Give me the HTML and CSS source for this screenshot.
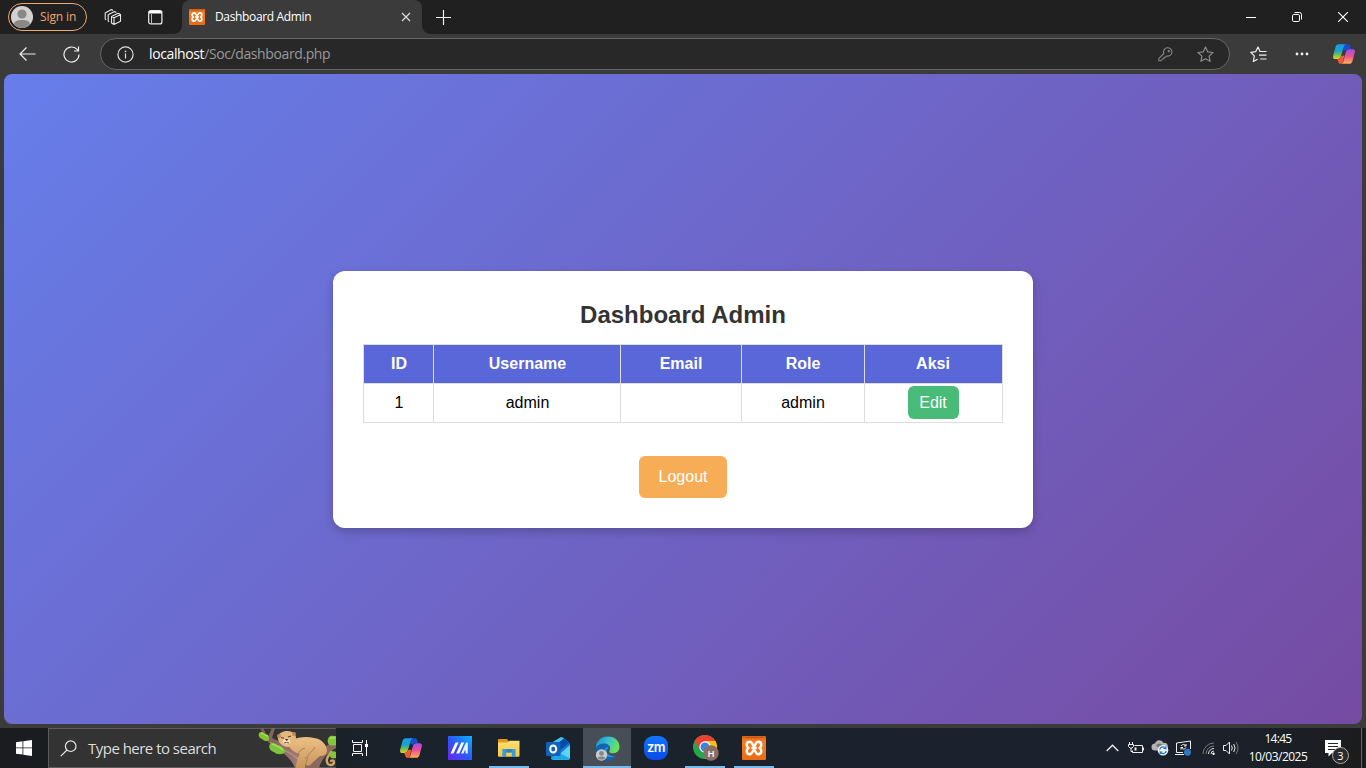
FILE: index.html
```html
<!DOCTYPE html>
<html lang="id">
<head>
<meta charset="utf-8">
<title>Dashboard Admin</title>
<link rel="stylesheet" href="styles.css">
</head>
<body>
<svg class="defs" width="0" height="0" aria-hidden="true">
  <defs>
    <linearGradient id="cpA" x1="0" y1="0" x2="0" y2="1"><stop offset="0" stop-color="#1b9cf0"/><stop offset=".45" stop-color="#17a3c8"/><stop offset=".72" stop-color="#6ebf55"/><stop offset="1" stop-color="#f4cf1c"/></linearGradient>
    <linearGradient id="cpB" x1="0" y1="0" x2="0" y2="1"><stop offset="0" stop-color="#a44cf0"/><stop offset=".45" stop-color="#e84f9b"/><stop offset="1" stop-color="#ffb04d"/></linearGradient>
    <linearGradient id="xg" x1="0" y1="0" x2="0" y2="1"><stop offset="0" stop-color="#d95f14"/><stop offset=".2" stop-color="#f57c22"/><stop offset="1" stop-color="#ea6c16"/></linearGradient>
    <linearGradient id="edgeTop" x1="0" y1="0" x2="1" y2=".4"><stop offset="0" stop-color="#1686d8"/><stop offset=".5" stop-color="#35bfd0"/><stop offset="1" stop-color="#6be05c"/></linearGradient>
    <linearGradient id="mg" x1="0" y1="1" x2="1" y2="0"><stop offset="0" stop-color="#6a22f5"/><stop offset=".5" stop-color="#2b5bfa"/><stop offset="1" stop-color="#08b4ff"/></linearGradient>
    <linearGradient id="fur" x1="0" y1="0" x2="0" y2="1"><stop offset="0" stop-color="#ecc184"/><stop offset="1" stop-color="#c9955d"/></linearGradient>
    <linearGradient id="bark" x1="0" y1="0" x2="1" y2="0"><stop offset="0" stop-color="#7a5a50"/><stop offset="1" stop-color="#a5857a"/></linearGradient>
    <linearGradient id="folder" x1="0" y1="0" x2="0" y2="1"><stop offset="0" stop-color="#ffdf75"/><stop offset="1" stop-color="#f9c844"/></linearGradient>
    <symbol id="copilot" viewBox="0 0 22 20">
      <path d="M11 .2h4c1.300 0 1.900.8 2.200 2L18 5.200h-2.500c-1.700 0-2.500.6-3 2L10 5z" fill="#174fd3"/>
      <path d="M5.500.2H13c-1.500.3-2 1.600-2.500 3.200L8 12c-.6 2-1.500 3-3.400 3H2.200C.4 15-.3 13.500.2 11.500L2.500 3C3 1.200 4 .2 5.500.2z" fill="url(#cpA)"/>
      <path d="M4.300 15c2.300 0 3.300-1.200 4-3l3.200-.5-1.500 5.700c-.5 1.800-1 2.600-2.500 2.600-1.200 0-1.800-.6-2.100-1.900z" fill="#f15b35"/>
      <path d="M16.300 5.200h3.500c1.800 0 2.500 1.500 2 3.300L19.500 17c-.5 1.900-1.500 2.800-3.200 2.800H8c1.500-.2 2-1.200 2.500-2.800L12.800 8.200c.6-2 1.600-3 3.500-3z" fill="url(#cpB)"/>
    </symbol>
    <symbol id="xampp" viewBox="0 0 24 24">
      <rect width="24" height="24" rx="1" fill="url(#xg)"/>
      <path d="M3 1.500h18" stroke="#c2550f"/>
      <path d="M12 9.700C10 9.700 10.600 5.800 8 5.800 5.800 5.800 4.700 7.200 4.700 9c0 1.400.7 2.400 1.800 3-1.100.6-1.800 1.600-1.800 3 0 1.800 1.100 3.200 3.300 3.200 2.600 0 2-3.900 4-3.900s1.400 3.900 4 3.900c2.200 0 3.300-1.400 3.300-3.200 0-1.400-.7-2.400-1.800-3 1.100-.6 1.800-1.600 1.800-3 0-1.800-1.100-3.200-3.300-3.200-2.600 0-2 3.900-4 3.900z" fill="none" stroke="#fff" stroke-width="2.500" stroke-linejoin="round"/>
      <path d="M10.500 12h3" stroke="#fff" stroke-width="2.800" stroke-linecap="round"/>
    </symbol>
  </defs>
</svg>

<div class="desktop">
  <header class="titlebar">
    <div class="profile">
      <svg width="22" height="22" viewBox="0 0 22 22"><circle cx="11" cy="11" r="11" fill="#d4d2d0"/><circle cx="11" cy="8" r="4.600" fill="#8a8886"/><path d="M3 18.500c.3-3.500 3-4.500 8-4.500s7.700 1 8 4.500a11 11 0 0 1-16 0z" fill="#8a8886"/></svg>
      <span class="ui signin">Sign in</span>
    </div>
    <svg class="workspaces" width="18" height="18" viewBox="0 0 18 18" fill="none" stroke="#e8e8e8" stroke-width="1.100" stroke-linejoin="round"><path d="M7.500 8.500 14 5.200l2.500 1.300v6.800L10 16.500l-2.500-1.400zM7.500 8.500l2.500 1.200 6.300-3M10 9.900v6.400M5.200 13.700l-1-.6V6.700L10.500 3.500l1.800.9M2.200 11.700l-1-.6V4.900L7.500 1.600l1.600.9"/></svg>
    <svg class="tabmenu" width="15" height="15" viewBox="0 0 15 15"><rect x=".7" y=".7" width="13.200" height="13.200" rx="2" fill="none" stroke="#eee" stroke-width="1.200"/><path d="M1 1h12.800v2.500H1z" fill="#fff"/><path d="M3.500 4v9.500" stroke="#bbb"/></svg>
    <div class="tab">
      <svg width="16" height="16"><use href="#xampp"/></svg>
      <span class="ui tabtitle">Dashboard Admin</span>
      <svg class="tabclose" width="10" height="10" viewBox="0 0 10 10" stroke="#ddd" stroke-width="1.200"><path d="M1 1l8 8M9 1L1 9"/></svg>
    </div>
    <svg class="newtab" width="15" height="15" viewBox="0 0 15 15" stroke="#f2f2f2" stroke-width="1.200"><path d="M7.500 0v15M0 7.500h15"/></svg>
    <div class="winbtns">
      <svg width="10" height="10" stroke="#fff"><path d="M0 5.500h10"/></svg>
      <svg width="10" height="10" viewBox="0 0 10 10" fill="none" stroke="#fff"><rect x=".5" y="2.500" width="7" height="7" rx="1.300"/><path d="M2.500.5h5a2 2 0 0 1 2 2v5"/></svg>
      <svg width="10" height="10" stroke="#fff" stroke-width="1.100"><path d="M0 0l10 10M10 0L0 10"/></svg>
    </div>
  </header>

  <nav class="toolbar">
    <svg class="back" width="17" height="14" viewBox="0 0 17 14" fill="none" stroke="#ededed" stroke-width="1.200"><path d="M16.500 7H1M7.500.5 1 7l6.500 6.500"/></svg>
    <svg class="reload" width="17" height="17" viewBox="0 0 17 17" fill="none" stroke="#ededed" stroke-width="1.200"><path d="M16 8.500A7.500 7.500 0 1 1 13.800 3.200L15.500 5M15.500.5V5H11"/></svg>
    <div class="address">
      <svg width="17" height="17" viewBox="0 0 17 17" fill="none" stroke="#ddd" stroke-width="1.200"><circle cx="8.500" cy="8.500" r="7.600"/><path d="M8.500 7.500v5"/><path d="M8.500 4.700v1.500" stroke-width="1.500"/></svg>
      <span class="ui url"><b>localhost</b>/Soc/dashboard.php</span>
      <svg class="key" width="15" height="15" viewBox="0 0 15 15" fill="none" stroke="#858585" stroke-width="1.100" stroke-linejoin="round"><path d="M5.800 6.500A4.200 4.200 0 1 1 8.600 9L7.400 10.300H6v1.400H4.700L3.200 13.800H.8v-2.200z"/><circle cx="10.800" cy="4.200" r=".6" fill="#858585"/></svg>
      <svg class="star" width="17" height="17" viewBox="0 0 17 17" fill="none" stroke="#8c8c8c" stroke-width="1.200" stroke-linejoin="round"><path d="M8.500 1l2.200 4.800 5.300.7-3.900 3.600 1 5.200-4.600-2.500-4.600 2.500 1-5.200L1 6.500l5.300-.7z"/></svg>
    </div>
    <svg class="favs" width="17" height="17" viewBox="0 0 17 17" fill="none" stroke="#f0f0f0" stroke-width="1.200" stroke-linejoin="round"><path d="M10.200 5.500H10L8 1 5.800 5.600.8 6.300l3.500 3.600-1 5.600 4.300-2.300M10 5.500h6.500M9 9.200h7.500M10.200 13h6.300"/></svg>
    <svg class="dots" width="14" height="4" fill="#eee"><circle cx="2" cy="2" r="1.400"/><circle cx="7" cy="2" r="1.400"/><circle cx="12" cy="2" r="1.400"/></svg>
    <svg class="copilot" width="22" height="20"><use href="#copilot"/></svg>
  </nav>

  <main class="page">
    <section class="card">
      <h2>Dashboard Admin</h2>
      <table>
        <colgroup><col class="c-id"><col class="c-user"><col class="c-mail"><col class="c-role"><col class="c-act"></colgroup>
        <thead><tr><th>ID</th><th>Username</th><th>Email</th><th>Role</th><th>Aksi</th></tr></thead>
        <tbody><tr><td>1</td><td>admin</td><td></td><td>admin</td><td><a class="btn edit">Edit</a></td></tr></tbody>
      </table>
      <a class="btn logout">Logout</a>
    </section>
  </main>

  <footer class="taskbar">
    <div class="start"><svg width="16" height="16" viewBox="0 0 16 16" fill="#fff"><path d="M0 2.200 6.500 1.300V7.500H0zM7.300 1.200 16 0v7.500H7.300zM0 8.300h6.500v6.300L0 13.700zM7.300 8.300H16V16l-8.700-1.200z"/></svg></div>
    <div class="search">
      <svg class="glass" width="17" height="17" viewBox="0 0 17 17" fill="none" stroke="#e6e6e6" stroke-width="1.200"><circle cx="10.700" cy="6.200" r="5.300"/><path d="M7 10 .8 16.200"/></svg>
      <span class="ui hint">Type here to search</span>
      <svg class="doodle" width="78" height="40" viewBox="0 0 78 40">
        <path d="M2 0h3l5 9c1-2 2-5 4-9h3l-3 10c9 5 22 8 30 15l6 15H37C32 27 18 21 9 13z" fill="url(#bark)"/>
        <path d="M42 40c4-10 13-15 19-18 6-3 11-6 17-11v9c-8 5-14 10-17 20z" fill="#8a6a5f"/>
        <path d="M12 14c9 7 20 9 28 17" stroke="#b19185" stroke-width="1.500" fill="none"/>
        <path d="M73 24c-3 4-6 8-3 12 2 2 6 1 6-2 0-2-2-2-3-1" fill="none" stroke="#d5a36a" stroke-width="2.400" stroke-linecap="round"/>
        <path d="M36 11c6-2 13-3 20-1 8 1 13 7 13 13 0 3-3 5-7 5l-8 7c-2 4-7 3-6 0l3-7c-3 4-4 8-4 12h-9c0-6 2-11 4-14-6-1-12-6-11-11z" fill="url(#fur)"/>
        <path d="M57 19c-3 5-7 8-10 12M40 26c1-3 4-5 7-6" stroke="#a97846" stroke-width=".9" fill="none"/>
        <path d="M20 8c1-3 5-5 10-5 4 0 8 3 8 7 0 5-3 9-8 9-6 0-11-5-10-11z" fill="#e4b77b"/>
        <circle cx="21" cy="8" r="2" fill="#c08852"/><circle cx="36" cy="6" r="2" fill="#c08852"/>
        <path d="M23 9.500l3 .7M30 9l3-1" stroke="#5a3927"/>
        <ellipse cx="28.500" cy="13.500" rx="3.800" ry="3" fill="#f2dfc6"/>
        <path d="M26.700 11h3.800L28.700 13z" fill="#4b2d24"/><path d="M26 15q2.500-1 5 0" stroke="#6b4a3d" fill="none"/>
        <path d="M1 5c2-2 4-1 6 1 3 0 5 3 4 6-2 2-5 1-7-1-3-1-4-3-3-6z" fill="#83c233"/>
        <path d="M12 16c2-2 5-1 7 1 4 0 8 4 8 7-2 3-8 3-11 0-4-1-6-5-4-8z" fill="#7cc63b"/>
        <path d="M71 9c2-2 5-1 7-1v9c-3 1-7 1-8-2-1-3 0-4 1-6zM72 25c2-2 4-2 6-1v6c-4 1-8-1-6-5z" fill="#84c63a"/>
        <path d="M3 5c2 0 4 3 7 3M14 16c4 1 8 3 11 6M72 10l5 0" stroke="#a8da5e" stroke-width="1.300" fill="none"/>
      </svg>
    </div>
    <div class="slot"><svg width="17" height="16" viewBox="0 0 17 16" fill="none" stroke="#f3f3f3"><path d="M.5 0v2.500h10V0M.5 16v-2.500h10V16M1.500 4.500h8v7h-8zM14.500 0v16"/><rect x="13" y="4" width="3" height="3" fill="#fff" stroke="none"/></svg></div>
    <div class="slot gap"><svg width="22" height="20"><use href="#copilot"/></svg></div>
    <div class="slot"><svg width="24" height="24" viewBox="0 0 24 24"><rect width="24" height="24" fill="url(#mg)"/><path d="M2.500 17.500 7.500 6.500h3l-5 11zM8.200 17.500l5-11h3l-5 11z" fill="#fff"/><path d="M13 17.500 18 6.500h1.800v11h-2.300v-3.500H17l-1.500 3.500z" fill="#fff" fill-opacity=".9"/></svg></div>
    <div class="slot open"><svg width="22" height="18" viewBox="0 0 22 18"><path d="M0 1C0 .4.400 0 1 0h8l2 2.500V6H0z" fill="#df9a10"/><path d="M0 3.500h9.500l2-1.800h10v15.200c0 .5-.4.800-1 .8H1c-.6 0-1-.3-1-.8z" fill="url(#folder)"/><path d="M4.300 10h13.200v8h-3.700v-4.500H8.200V18H4.300z" fill="#3c9bd9"/><path d="M8.200 10h5.600v3.500H8.200z" fill="#2f86c5"/></svg></div>
    <div class="slot"><svg width="24" height="23" viewBox="0 0 24 23"><path d="M5 7 15 .7c1-.6 2-.6 3 .2l5 4.500c.6.5 1 1.300 1 2.300v13c0 1.300-1 2-2 2H7c-1.300 0-2-1-2-2z" fill="#1478cf"/><path d="M12 5 18 1l5 5-9 7z" fill="#0a4ca2"/><path d="M6 5.500 15 0l3 1.500L9 8z" fill="#46c2ee"/><path d="M24 8v12.500c0 1.500-1 2.200-2.300 2.200H7z" fill="#5dd3f5"/><path d="M12 15l12 6.500c-.5.800-1.200 1.200-2.300 1.200H7c-1 0-1.700-.6-2-1.200z" fill="#20a9e8"/><rect y="5" width="14.500" height="14" rx="1.500" fill="#0f63bf"/><ellipse cx="7.200" cy="12" rx="3" ry="3.500" fill="none" stroke="#fff" stroke-width="2"/></svg></div>
    <div class="slot active"><svg width="25" height="25" viewBox="0 0 25 25"><path d="M1 12C1 5 6 .5 13 .5S24.500 5 24.500 11c0 4-3 6.300-7 6.300-3 0-3.800-1-3-2.500 2-4-1-7-5.500-7-3.500 0-6.500 1.500-8 4.200z" fill="url(#edgeTop)"/><path d="M1 12c1.500-3 5-4.600 8-4.500 3 .1 5.500 1.700 5.700 4-3-1-6 1-6 4.500 0 4.500 5.500 7 12.300 3.500-2 3.500-5 5-8.500 5C5.500 24.500.5 19 1 12z" fill="#1064b8"/><path d="M8.700 16c0-3 2-5 5-5-4 4-2 9.500 6.500 9.200-6 2.300-11.500.1-11.500-4.200z" fill="#2396df"/><circle cx="6.500" cy="19" r="5.700" fill="#ccc"/><circle cx="6.500" cy="17.400" r="2.400" fill="#868686"/><path d="M2.500 22c.5-2 7.500-2 8 0a5.700 5.700 0 0 1-8 0z" fill="#868686"/></svg></div>
    <div class="slot"><div class="zoom">zm</div></div>
    <div class="slot open chrome"><svg width="26" height="26" viewBox="0 0 26 26"><circle cx="12" cy="12" r="12" fill="#29a64c"/><path d="M12 0a12 12 0 0 1 10.400 6H12L6.500 14 1.700 5.900A12 12 0 0 1 12 0z" fill="#ea4335"/><path d="M12 6h10.400A12 12 0 0 1 12 24l5.500-9z" fill="#fbc116"/><circle cx="12" cy="12" r="5.700" fill="#fff"/><circle cx="12" cy="12" r="4.500" fill="#3b82ec"/><circle cx="18" cy="18" r="7.700" fill="#8d6e63"/><text class="svgtext" x="18" y="21.600" font-size="9.500" font-weight="600" text-anchor="middle" fill="#fff">H</text></svg></div>
    <div class="slot open"><svg width="24" height="24"><use href="#xampp"/></svg></div>
    <div class="tray">
      <svg width="13" height="8" viewBox="0 0 13 8" fill="none" stroke="#eee" stroke-width="1.300"><path d="M.7 7 6.500 1.200 12.300 7"/></svg>
      <svg class="t-bat" width="17" height="13" viewBox="0 0 17 13" fill="none" stroke="#eee"><path d="M6.500 3.500H14.500v7H4.500V8.500M15.500 5.500v3M1.500 0v2.500M4.500 0v2.500M.5 2.500h5v2l-1.500 1.500h-2L.5 4.500zM3 6v3.500h1.500"/><path d="M6.500 5.500h2v3h-2z" fill="#eee" stroke="none"/></svg>
      <svg class="t-cloud" width="18" height="16" viewBox="0 0 18 16"><path d="M4 10.500a3.500 3.500 0 0 1 0-7A4.500 4.500 0 0 1 12.500 3 3.500 3.500 0 0 1 14 10z" fill="#b4b4b4"/><path d="M5 5.500a4 4 0 0 1 7 0l-3 4z" fill="#777"/><circle cx="12" cy="10.200" r="5.300" fill="#f6f9fc"/><path d="M8.700 9.500a3.400 3.400 0 0 1 6.100-1.200V6.500m0 2h-2.300M15.300 11a3.400 3.400 0 0 1-6.100 1.200V14m0-2h2.300" fill="none" stroke="#1a78c9" stroke-width="1.200"/></svg>
      <svg class="t-upd" width="17" height="16" viewBox="0 0 17 16" fill="none" stroke="#eee"><path d="M8 12.500H1.500V3l14-2v8M0 14.500h9"/><path d="M6 6c1-2 4-2 5 0V4M11 6H9M11 7.500c-1 2-4 2-5 0v2M6 7.500h2"/><circle cx="12.500" cy="12.300" r="3.500" fill="#2b78c6" stroke="none"/></svg>
      <svg class="t-wifi" width="13" height="13" viewBox="0 0 13 13" fill="none"><path d="M1 12A11 11 0 0 1 12 1M4 12a8 8 0 0 1 8-8" stroke="#777"/><path d="M6.500 12A5.500 5.500 0 0 1 12 6.500M9 12a3 3 0 0 1 3-3" stroke="#ddd"/><circle cx="11.500" cy="11.700" r="1.200" fill="#fff"/></svg>
      <svg class="t-vol" width="16" height="14" viewBox="0 0 16 14" fill="none" stroke="#eee"><path d="M.5 4.500H3l3.500-3.500v12L3 9.500H.5zM8.500 4.500q1.500 2.500 0 5M10.700 3q2.800 4 0 8"/><path d="M13 1q4 6 0 12" stroke="#777"/></svg>
      <div class="clock ui"><span>14:45</span><span class="date">10/03/2025</span></div>
      <div class="notif">
        <svg width="16" height="17" viewBox="0 0 16 17"><path d="M0 0h16v13H7l-3.500 3.500V13H0z" fill="#fff"/><path d="M3 3.500h10M3 6.500h10M3 9.500h7" stroke="#262626"/></svg>
        <span class="badge ui">3</span>
      </div>
      <div class="peek"></div>
    </div>
  </footer>
</div>
</body>
</html>
```
FILE: styles.css
```css
* { box-sizing: border-box; }
body { margin: 0; font-family: "Liberation Sans", Arial, sans-serif; }
svg { display: block; flex: none; }
.defs { position: absolute; }
.ui, .svgtext { font-family: "Open Sans", "Noto Sans", sans-serif; white-space: nowrap; }
.desktop { width: 1366px; height: 768px; display: flex; flex-direction: column; background: #3b3b3b; overflow: hidden; }

.titlebar { height: 34px; flex: none; display: flex; align-items: center; background: #202020; padding-left: 8px; }
.profile { width: 79px; height: 28px; display: flex; align-items: center; gap: 7px; padding-left: 2px; border: 1px solid #efa772; border-radius: 14px; }
.signin { color: #efa46f; font-size: 12px; letter-spacing: -.1px; line-height: 16px; }
.workspaces { margin-left: 17px; }
.tabmenu { margin-left: 26px; }
.tab { position: relative; width: 240px; height: 34px; margin-left: 19px; padding: 0 11px 0 7px; display: flex; align-items: center; background: #3b3b3b; border-radius: 8px 8px 0 0; }
.tab::before, .tab::after { content: ""; position: absolute; bottom: 0; width: 8px; height: 8px; }
.tab::before { left: -8px; background: radial-gradient(circle at 0 0, #202020 7.500px, #3b3b3b 8px); }
.tab::after { right: -8px; background: radial-gradient(circle at 100% 0, #202020 7.500px, #3b3b3b 8px); }
.tabtitle { margin-left: 10px; color: #fff; font-size: 12px; letter-spacing: -.35px; line-height: 16px; }
.tabclose { margin-left: auto; }
.newtab { margin-left: 14px; }
.winbtns { margin-left: auto; display: flex; gap: 36px; padding-right: 18px; }

.toolbar { height: 40px; flex: none; display: flex; align-items: center; padding-left: 19px; }
.reload { margin-left: 27px; }
.address { width: 1130px; height: 32px; margin-left: 20px; padding: 0 15px 0 16px; display: flex; align-items: center; background: #282828; border: 1px solid #666; border-radius: 16px; }
.url { margin-left: 15px; color: #999; font-size: 14px; letter-spacing: -.39px; line-height: 20px; }
.url b { color: #fff; font-weight: 400; }
.key { margin-left: auto; }
.star { margin-left: 24px; }
.favs { margin-left: 20px; }
.dots { margin-left: 28px; }
.copilot { margin-left: 24px; }

.page { height: 650px; flex: none; margin: 0 4px 4px; border-radius: 8px; display: flex; align-items: center; justify-content: center; background: linear-gradient(135deg, #667eea, #764ba2); }
.card { width: 700px; height: 257px; padding: 30px; background: #fff; border-radius: 12px; box-shadow: 0 4px 10px rgba(0, 0, 0, .2); display: flex; flex-direction: column; align-items: center; }
h2 { margin: 0 0 15px; color: #333; font-size: 24px; line-height: 28px; }
table { width: 639px; align-self: flex-start; border-collapse: collapse; table-layout: fixed; font-size: 16px; line-height: 18px; }
.c-id { width: 70px; }
.c-user { width: 187px; }
.c-mail { width: 121px; }
.c-role { width: 123px; }
.c-act { width: 138px; }
th, td { height: 39px; padding: 10px 10px 10px 11px; border: 1px solid #ddd; text-align: center; }
th { background: #5a67d8; color: #fff; }
th:nth-child(3), th:nth-child(4), td:nth-child(4) { padding-left: 10px; }
th:last-child, td:last-child { padding: 10px 11px 10px 10px; }
.btn { color: #fff; font-size: 16px; border-radius: 6px; line-height: 18px; }
.edit { display: block; width: 51px; height: 33px; margin: -8px auto -7px; padding: 8px 0 7px; background: #48bb78; }
.logout { width: 88px; height: 42px; margin-top: 33px; padding: 12px 0; background: #f6ad55; text-align: center; }

.taskbar { height: 40px; flex: none; display: flex; background: linear-gradient(90deg, #1a1c1f 0, #1a222b 30%, #1b222e 80%, #1b2028 93%, #1c1c1c 100%); }
.start { width: 48px; display: flex; align-items: center; justify-content: center; }
.search { width: 288px; display: flex; align-items: center; padding-left: 11px; background: #333; border: 1px solid #5b5b5b; border-right: 0; }
.hint { margin-left: 11px; color: #ddd; font-size: 15px; letter-spacing: -.52px; line-height: 20px; }
.doodle { margin-left: auto; }
.slot { width: 48px; height: 40px; margin-right: 1px; display: flex; align-items: center; justify-content: center; border-bottom: 2px solid transparent; padding-top: 2px; }
.slot.gap { margin-left: 2px; }
.open { border-image: linear-gradient(90deg, transparent 4px, #76b9ed 4px, #76b9ed 44px, transparent 44px) 0 0 2 0; }
.active { background: #484e58; border-color: #76b9ed; }
.chrome { padding-left: 2px; }
.zoom { width: 24px; height: 24px; border-radius: 9px; background: linear-gradient(#1475ff, #0848e8); color: #fff; font: 600 13px/22px Inter, sans-serif; letter-spacing: -.6px; text-align: center; }
.tray { margin-left: auto; display: flex; align-items: center; }
.t-bat { margin-left: 9px; }
.t-cloud { margin-left: 6px; }
.t-upd { margin-left: 6px; }
.t-wifi { margin-left: 10px; }
.t-vol { margin-left: 8px; }
.clock { width: 66px; margin-left: 6px; display: flex; flex-direction: column; align-items: center; color: #fff; font-size: 12px; line-height: 18px; letter-spacing: -.7px; }
.date { letter-spacing: -.5px; }
.notif { position: relative; margin-left: 14px; width: 24px; height: 17px; }
.badge { position: absolute; left: 7px; top: 7px; width: 17px; height: 17px; border: 1px solid #aaa; border-radius: 50%; background: #2b2b2b; color: #fff; font-size: 11px; line-height: 15px; text-align: center; }
.peek { width: 5px; height: 40px; margin-left: 12px; border-left: 1px solid #666; }
```
